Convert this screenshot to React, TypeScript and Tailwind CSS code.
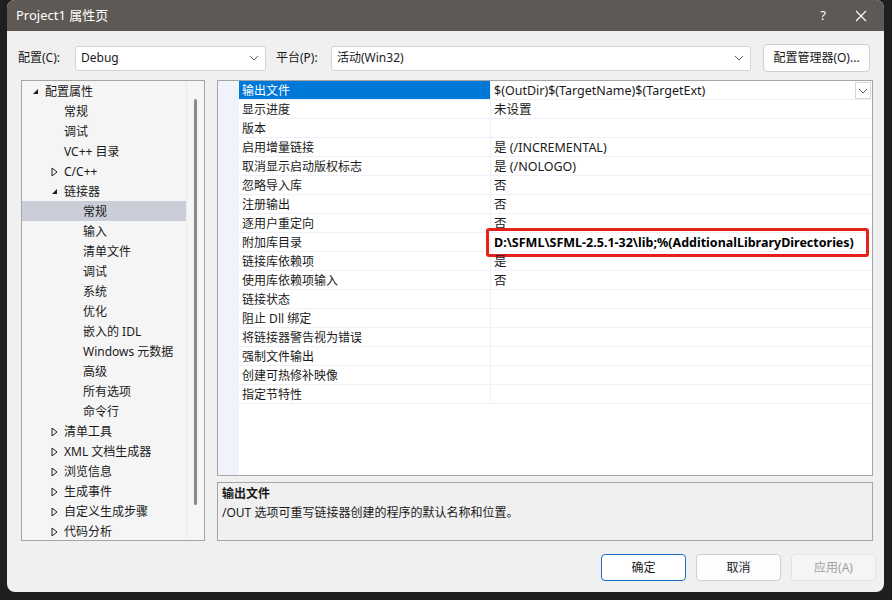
import React from 'react';

const font = { fontFamily: '"Noto Sans", "Noto Sans CJK SC", sans-serif' };

type TreeItem = { label: string; level: number; arrow?: 'open' | 'closed'; selected?: boolean };

const tree: TreeItem[] = [
  { label: '配置属性', level: 0, arrow: 'open' },
  { label: '常规', level: 1 },
  { label: '调试', level: 1 },
  { label: 'VC++ 目录', level: 1 },
  { label: 'C/C++', level: 1, arrow: 'closed' },
  { label: '链接器', level: 1, arrow: 'open' },
  { label: '常规', level: 2, selected: true },
  { label: '输入', level: 2 },
  { label: '清单文件', level: 2 },
  { label: '调试', level: 2 },
  { label: '系统', level: 2 },
  { label: '优化', level: 2 },
  { label: '嵌入的 IDL', level: 2 },
  { label: 'Windows 元数据', level: 2 },
  { label: '高级', level: 2 },
  { label: '所有选项', level: 2 },
  { label: '命令行', level: 2 },
  { label: '清单工具', level: 1, arrow: 'closed' },
  { label: 'XML 文档生成器', level: 1, arrow: 'closed' },
  { label: '浏览信息', level: 1, arrow: 'closed' },
  { label: '生成事件', level: 1, arrow: 'closed' },
  { label: '自定义生成步骤', level: 1, arrow: 'closed' },
  { label: '代码分析', level: 1, arrow: 'closed' },
];

const props: [string, string][] = [
  ['输出文件', '$(OutDir)$(TargetName)$(TargetExt)'],
  ['显示进度', '未设置'],
  ['版本', ''],
  ['启用增量链接', '是 (/INCREMENTAL)'],
  ['取消显示启动版权标志', '是 (/NOLOGO)'],
  ['忽略导入库', '否'],
  ['注册输出', '否'],
  ['逐用户重定向', '否'],
  ['附加库目录', 'D:\\SFML\\SFML-2.5.1-32\\lib;%(AdditionalLibraryDirectories)'],
  ['链接库依赖项', '是'],
  ['使用库依赖项输入', '否'],
  ['链接状态', ''],
  ['阻止 Dll 绑定', ''],
  ['将链接器警告视为错误', ''],
  ['强制文件输出', ''],
  ['创建可热修补映像', ''],
  ['指定节特性', ''],
];

function Chevron() {
  return (
    <svg width="10" height="6" viewBox="0 0 10 6" fill="none">
      <path d="M1 1l4 4 4-4" stroke="#606060" strokeWidth="1" />
    </svg>
  );
}

function Arrow({ kind }: { kind: 'open' | 'closed' }) {
  if (kind === 'open') {
    return (
      <svg width="7" height="7" viewBox="0 0 7 7">
        <path d="M6 1V6H1Z" fill="#1e1e1e" />
      </svg>
    );
  }
  return (
    <svg width="7" height="10" viewBox="0 0 7 10">
      <path d="M1 1L6 5L1 9Z" fill="none" stroke="#1e1e1e" strokeWidth="1" />
    </svg>
  );
}

function Select({ value, className }: { value: string; className: string }) {
  return (
    <div className={`h-[25px] bg-white border border-[#d4d4d4] rounded-[3px] flex items-center justify-between pl-[5px] pr-[6px] ${className}`}>
      <span>{value}</span>
      <Chevron />
    </div>
  );
}

export default function App() {
  return (
    <div className="w-[892px] h-[600px] bg-[#1f1f1f] pl-[7px] pr-[8px] pb-[8px] text-[12px] text-[#1a1a1a]" style={font}>
      <div className="h-full rounded-lg overflow-hidden flex flex-col bg-[#f0f0f0]">
        <div className="h-[31px] bg-[#5e5955] flex items-center pl-[9px] text-white text-[13px]">
          <span className="flex-1">Project1 属性页</span>
          <span className="w-[20px] text-center mr-[22px]">?</span>
          <svg width="12" height="12" viewBox="0 0 12 12" className="mr-[17px]">
            <path d="M1 1L11 11M11 1L1 11" stroke="#fff" strokeWidth="1.1" />
          </svg>
        </div>

        <div className="flex items-center h-[28px] mt-[13px] pl-[11px] pr-[14px]">
          <span className="w-[57px]">配置(C):</span>
          <Select value="Debug" className="w-[191px]" />
          <span className="ml-[10px] w-[55px]">平台(P):</span>
          <Select value="活动(Win32)" className="w-[420px]" />
          <div className="ml-[12px] h-[28px] flex-1 bg-[#fdfdfd] border border-[#cfcfcf] rounded-[4px] flex items-center justify-center">
            配置管理器(O)...
          </div>
        </div>

        <div className="flex mt-[8px] pl-[14px] pr-[11px] gap-[12px] h-[461px]">
          <div className="w-[184px] border border-[#a5a5a5] bg-[#f5f5f5] flex">
            <div className="flex-1 flex flex-col">
              {tree.map((t, i) => (
                <div
                  key={i}
                  className={`h-[20px] shrink-0 flex items-center pt-[1px] ${t.selected ? 'bg-[#cbcdd9]' : ''}`}
                  style={{ paddingLeft: 10 + t.level * 19 }}
                >
                  <span className="w-[13px] flex items-center">{t.arrow && <Arrow kind={t.arrow} />}</span>
                  <span className="whitespace-nowrap">{t.label}</span>
                </div>
              ))}
            </div>
            <div className="w-[18px] flex justify-center pt-[18px] pb-[35px] bg-[#f5f5f5] border-l border-[#ebebeb]">
              <div className="w-[3px] h-full bg-[#8a8a8a] rounded-full" />
            </div>
          </div>

          <div className="flex-1 flex flex-col">
            <div className="h-[396px] border border-[#a5a5a5] bg-white flex">
              <div className="w-[21px] bg-[#f0f4fa]" />
              <div className="flex-1 flex flex-col">
                {props.map(([name, value], i) => (
                  <div key={i} className="h-[19px] shrink-0 flex border-b border-[#eef2f8]">
                    <div className={`w-[252px] flex items-center pl-[3px] pt-[2px] border-r border-[#eef2f8] ${i === 0 ? 'bg-[#0078d7] text-white' : ''}`}>
                      {name}
                    </div>
                    <div className="flex-1 relative flex items-center pl-[3px] pt-[2px] text-[12.5px]">
                      {i === 8 ? (
                        <>
                          <span className="font-bold text-black">{value}</span>
                          <div className="absolute left-[-5px] right-[3px] top-[-5px] bottom-[-6px] border-[3px] border-[#e5211a] rounded-[3px]" />
                        </>
                      ) : (
                        <span>{value}</span>
                      )}
                      {i === 0 && (
                        <div className="absolute right-[1px] top-[1px] w-[16px] h-[17px] border border-[#d8d8d8] bg-white flex items-center justify-center">
                          <Chevron />
                        </div>
                      )}
                    </div>
                  </div>
                ))}
              </div>
            </div>
            <div className="mt-[6px] flex-1 border border-[#a5a5a5] bg-[#f0f0f0] pl-[4px] pt-[1px]">
              <div className="font-bold leading-[19px]">输出文件</div>
              <div className="leading-[19px]">/OUT 选项可重写链接器创建的程序的默认名称和位置。</div>
            </div>
          </div>
        </div>

        <div className="flex justify-end gap-[10px] mt-[13px] pr-[8px]">
          <div className="w-[85px] h-[27px] bg-white border border-[#1a6fc4] rounded-[4px] flex items-center justify-center">确定</div>
          <div className="w-[85px] h-[27px] bg-[#fdfdfd] border border-[#d0d0d0] rounded-[4px] flex items-center justify-center">取消</div>
          <div className="w-[85px] h-[27px] bg-[#f5f5f5] border border-[#e3e3e3] rounded-[4px] flex items-center justify-center text-[#a0a0a0]">应用(A)</div>
        </div>
      </div>
    </div>
  );
}
